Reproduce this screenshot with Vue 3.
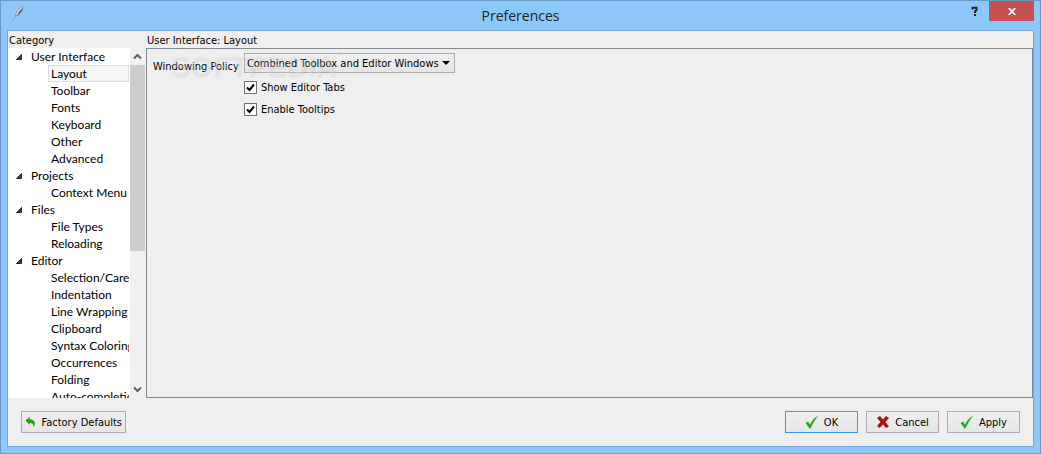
<script setup>
import { ref } from 'vue'

const groups = [
  { name: 'User Interface', items: ['Layout', 'Toolbar', 'Fonts', 'Keyboard', 'Other', 'Advanced'] },
  { name: 'Projects', items: ['Context Menu'] },
  { name: 'Files', items: ['File Types', 'Reloading'] },
  {
    name: 'Editor',
    items: ['Selection/Caret', 'Indentation', 'Line Wrapping', 'Clipboard', 'Syntax Coloring', 'Occurrences', 'Folding', 'Auto-completion'],
  },
]
const selected = ref('Layout')
const policy = ref('combined')
const showTabs = ref(true)
const tooltips = ref(true)
</script>

<template>
  <div class="window">
    <header class="titlebar">
      <svg class="app-icon" width="14" height="18" viewBox="0 0 14 18" aria-hidden="true">
        <path d="M12 2L9 3.500L5.500 7.500L4 12.500L7 12L10.500 8L12.500 4Z" fill="#7b8187" />
        <path d="M11.500 3L7.500 6.500L5.500 11" stroke="#d4d6d8" stroke-width="1.500" fill="none" />
        <path d="M11.500 5.500L8 10" stroke="#55595d" fill="none" />
        <path d="M5 12L1.500 16" stroke="#8c9aa6" fill="none" />
      </svg>
      <h1>Preferences</h1>
      <div class="caption-buttons">
        <button class="help" type="button" aria-label="Help">
          <svg width="8" height="11" viewBox="0 0 8 11" aria-hidden="true">
            <path d="M1.500 3.500V1.800H5.500V4L4 5.500V7" fill="none" stroke="#222" stroke-width="2" />
            <rect x="3" y="8" width="2" height="2" fill="#222" />
          </svg>
        </button>
        <button class="close" type="button" aria-label="Close">
          <svg width="8" height="7" viewBox="0 0 8 7" aria-hidden="true">
            <path d="M0.800 0L7.200 7M7.200 0L0.800 7" stroke="#fff" stroke-width="1.800" />
          </svg>
        </button>
      </div>
    </header>

    <main class="client">
      <div class="columns">
        <section class="category">
          <h2>Category</h2>
          <div class="tree-box">
            <ul class="tree">
              <li v-for="group in groups" :key="group.name">
                <div class="group">
                  <svg width="6" height="6" viewBox="0 0 6 6" aria-hidden="true">
                    <path d="M5.500 0.500V5.500H0.500Z" fill="#404040" stroke="#262626" />
                  </svg>
                  <span>{{ group.name }}</span>
                </div>
                <ul>
                  <li v-for="item in group.items" :key="item">
                    <button type="button" class="item" :class="{ selected: item === selected }" @click="selected = item">{{ item }}</button>
                  </li>
                </ul>
              </li>
            </ul>
            <div class="scrollbar">
              <svg width="9" height="7" viewBox="0 0 9 7" aria-hidden="true">
                <path d="M1 5.500L4.500 2L8 5.500" fill="none" stroke="#606060" stroke-width="2" />
              </svg>
              <div class="track"><div class="thumb"></div></div>
              <svg width="9" height="7" viewBox="0 0 9 7" aria-hidden="true">
                <path d="M1 1.500L4.500 5L8 1.500" fill="none" stroke="#606060" stroke-width="2" />
              </svg>
            </div>
          </div>
        </section>

        <section class="page">
          <h2>User Interface: Layout</h2>
          <form class="panel" @submit.prevent>
            <label class="policy-label" for="policy">Windowing Policy</label>
            <div class="fields">
              <div class="select-box">
                <select id="policy" v-model="policy">
                  <option value="combined">Combined Toolbox and Editor Windows</option>
                  <option value="separate">Separate Toolbox and Editor Windows</option>
                </select>
                <svg class="arrow" width="8" height="4" viewBox="0 0 8 4" aria-hidden="true">
                  <path d="M0 0H8L4 4Z" fill="#000" />
                </svg>
              </div>
              <label class="check">
                <input v-model="showTabs" type="checkbox" />
                <svg class="tick" width="13" height="13" viewBox="0 0 13 13" aria-hidden="true">
                  <path d="M3 6.500L5.500 9L10 3.500" fill="none" stroke="#000" stroke-width="2" />
                </svg>
                <span>Show Editor Tabs</span>
              </label>
              <label class="check">
                <input v-model="tooltips" type="checkbox" />
                <svg class="tick" width="13" height="13" viewBox="0 0 13 13" aria-hidden="true">
                  <path d="M3 6.500L5.500 9L10 3.500" fill="none" stroke="#000" stroke-width="2" />
                </svg>
                <span>Enable Tooltips</span>
              </label>
            </div>
            <div class="watermark" aria-hidden="true">SOFTPEDIA<sup>®</sup></div>
          </form>
        </section>
      </div>

      <footer class="actions">
        <button type="button" class="btn factory">
          <svg width="12" height="12" viewBox="0 0 12 12" aria-hidden="true">
            <path d="M0.500 4.500L5 0.500V3C10 3 12 7 9 11.500C9 8.500 8 7 5 7V9Z" fill="#1ea51e" />
          </svg>
          Factory Defaults
        </button>
        <span class="spacer"></span>
        <button type="button" class="btn default">
          <svg width="14" height="14" viewBox="0 0 14 14" aria-hidden="true">
            <path d="M0.500 8L3 6.500L5 9.500C7 5.500 9.500 2.500 13.500 0.500C10 4.500 8 8 5.500 13.500H4.500Z" fill="#1eaf1e" />
          </svg>
          OK
        </button>
        <button type="button" class="btn">
          <svg width="14" height="14" viewBox="0 0 14 14" aria-hidden="true">
            <path d="M1 3L4 1L7 4.500L10 1L13 3L9.500 7L13 11.500L10 13L7 9.500L3.500 13L1 11L4.500 7Z" fill="#b01010" />
          </svg>
          Cancel
        </button>
        <button type="button" class="btn">
          <svg width="14" height="14" viewBox="0 0 14 14" aria-hidden="true">
            <path d="M0.500 8L3 6.500L5 9.500C7 5.500 9.500 2.500 13.500 0.500C10 4.500 8 8 5.500 13.500H4.500Z" fill="#1eaf1e" />
          </svg>
          Apply
        </button>
      </footer>
    </main>
  </div>
</template>

<style>
body {
  margin: 0;
}
</style>

<style scoped>
* {
  box-sizing: border-box;
}
.window {
  display: flex;
  flex-direction: column;
  height: 100vh;
  padding: 0 6px 6px;
  border: 1px solid #6b99c5;
  background: #8dc8fa;
  color: #000;
  font: 11px/17px "DejaVu Sans Condensed", "DejaVu Sans", sans-serif;
}
button,
select {
  font: inherit;
  color: inherit;
}
h1,
h2,
ul {
  margin: 0;
  padding: 0;
  font-weight: normal;
  list-style: none;
}
.titlebar {
  display: grid;
  grid-template-columns: 1fr auto 1fr;
  align-items: center;
  flex: 0 0 29px;
}
.app-icon {
  margin-left: 4px;
  margin-bottom: 6px;
}
.titlebar h1 {
  color: #222;
  font: 14px/28px "Open Sans", sans-serif;
}
.caption-buttons {
  display: flex;
  align-self: start;
  justify-content: flex-end;
}
.caption-buttons button {
  display: flex;
  align-items: center;
  justify-content: center;
  height: 20px;
  padding: 0;
  border: 0;
}
.caption-buttons .help {
  width: 28px;
  padding-top: 1px;
  background: transparent;
}
.caption-buttons .close {
  width: 45px;
  padding-top: 1px;
  background: #c75050;
}
.client {
  display: flex;
  flex: 1;
  flex-direction: column;
  min-height: 0;
  border: 1px solid #74a7dc;
  background: #efefef;
}
.columns {
  display: flex;
  flex: 1;
  min-height: 0;
}
.columns h2 {
  height: 17px;
  padding-left: 1px;
  font-size: 11px;
  line-height: 19px;
  white-space: nowrap;
}
.category,
.page {
  display: flex;
  flex-direction: column;
  min-width: 0;
}
.category {
  flex: 0 0 137px;
  margin-right: 1px;
}
.page {
  flex: 1;
}
.tree-box {
  display: flex;
  flex: 1;
  min-height: 0;
}
.tree {
  flex: 1;
  min-width: 0;
  border-right: 1px solid #fff;
  overflow: hidden;
  background: #fff;
  font: 12px/17px Lato, sans-serif;
}
.group {
  display: flex;
  align-items: center;
  gap: 9px;
  height: 17px;
  padding-left: 8px;
}
.item {
  display: block;
  width: calc(100% - 40px);
  height: 17px;
  margin-left: 40px;
  padding: 0 0 0 2px;
  overflow: hidden;
  border: 1px solid transparent;
  border-right-width: 0;
  background: transparent;
  line-height: 15px;
  text-align: left;
  white-space: nowrap;
}
.item.selected {
  border-right-width: 1px;
  border-color: #dedede;
  background: #f7f7f7;
}
.scrollbar {
  display: flex;
  flex: 0 0 15px;
  flex-direction: column;
  align-items: center;
  padding: 5px 0;
  background: #f0f0f0;
}
.track {
  flex: 1;
  width: 100%;
  margin: 5px 0;
}
.thumb {
  height: 59%;
  background: #cdcdcd;
}
.panel {
  position: relative;
  display: flex;
  flex: 1;
  gap: 5px;
  padding: 4px 6px;
  border: 1px solid #828790;
}
.policy-label {
  padding-top: 5px;
  white-space: nowrap;
}
.fields {
  display: flex;
  flex-direction: column;
  align-items: flex-start;
}
.select-box {
  position: relative;
  margin-bottom: 3px;
}
.select-box select {
  display: block;
  width: 211px;
  height: 20px;
  padding: 0 14px 0 2px;
  border: 1px solid #acacac;
  border-radius: 0;
  appearance: none;
  background: linear-gradient(#f0f0f0, #e5e5e5);
}
.arrow {
  position: absolute;
  top: 8px;
  right: 5px;
  pointer-events: none;
}
.check {
  position: relative;
  display: flex;
  align-items: center;
  gap: 4px;
  height: 22px;
}
.check input {
  width: 13px;
  height: 13px;
  margin: 0;
  border: 1px solid #707070;
  appearance: none;
  background: #fff;
}
.tick {
  position: absolute;
  left: 0;
  visibility: hidden;
  pointer-events: none;
}
.check input:checked + .tick {
  visibility: visible;
}
.watermark {
  position: absolute;
  top: 1px;
  left: 23px;
  color: rgba(245, 245, 245, 0.3);
  font: bold 29px/32px "Liberation Sans", sans-serif;
  text-shadow: 1px 1px 2px rgba(0, 0, 0, 0.08);
  pointer-events: none;
}
.watermark sup {
  font-size: 8px;
  line-height: 8px;
  vertical-align: top;
}
.actions {
  display: flex;
  gap: 8px;
  padding: 13px;
}
.spacer {
  flex: 1;
}
.btn {
  display: flex;
  align-items: center;
  justify-content: center;
  gap: 5px;
  width: 73px;
  height: 22px;
  padding: 0 3px;
  border: 1px solid #acacac;
  background: linear-gradient(#f0f0f0, #e5e5e5);
  white-space: nowrap;
}
.btn.factory {
  width: 105px;
}
.btn.default {
  border-color: #3399ff;
}
</style>
